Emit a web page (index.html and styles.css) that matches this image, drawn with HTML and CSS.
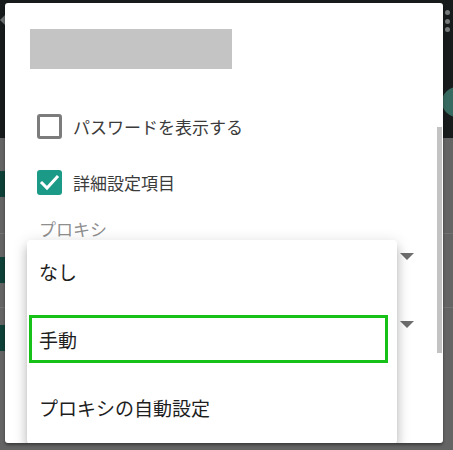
FILE: index.html
```html
<!DOCTYPE html>
<html lang="ja">
<head>
<meta charset="utf-8">
<title>プロキシ設定</title>
<link rel="stylesheet" href="styles.css">
</head>
<body>
<div class="backdrop">
  <div class="bg-back"></div>
  <div class="bg-dots"><span></span><span></span><span></span></div>
  <div class="bg-fab"></div>
  <div class="bg-marks"><span></span><span></span><span></span></div>
  <div class="bg-lines"><span></span><span></span></div>

  <div class="dialog">
    <div class="title-placeholder"></div>

    <label class="check-row">
      <span class="box"></span>
      <span class="check-label">パスワードを表示する</span>
    </label>
    <label class="check-row second">
      <span class="box checked">
        <svg viewBox="0 0 25 25" width="25" height="25"><polyline points="5,13 10,18 20,7" fill="none" stroke="#fff" stroke-width="3" stroke-linecap="square" stroke-linejoin="miter"/></svg>
      </span>
      <span class="check-label">詳細設定項目</span>
    </label>

    <div class="field-label">プロキシ</div>
    <div class="select-row"><span class="arrow"></span></div>
    <div class="select-row second"><span class="arrow"></span></div>

    <div class="scrollbar"></div>

    <ul class="menu">
      <li class="menu-item">なし</li>
      <li class="menu-item focused">手動</li>
      <li class="menu-item">プロキシの自動設定</li>
    </ul>
  </div>
</div>
</body>
</html>
```

FILE: styles.css
```css
html, body {
  margin: 0;
  padding: 0;
}

body {
  width: 453px;
  height: 450px;
  overflow: hidden;
  background: linear-gradient(to bottom, #171b1c 0, #171b1c 138px, #646464 138px, #646464 100%);
  font-family: "Noto Sans CJK JP", "Noto Sans", sans-serif;
}

.backdrop {
  position: relative;
  width: 453px;
  height: 450px;
  padding-top: 3px;
  box-sizing: border-box;
}

.bg-back {
  position: absolute;
  left: 0;
  top: 15px;
  width: 0;
  height: 0;
  border-top: 5px solid transparent;
  border-bottom: 5px solid transparent;
  border-right: 5px solid #6d7172;
}

.bg-dots {
  position: absolute;
  left: 445px;
  top: 10px;
  display: flex;
  flex-direction: column;
  gap: 3.5px;
}

.bg-dots span {
  width: 5px;
  height: 5px;
  border-radius: 50%;
  background: #75797a;
}

.bg-fab {
  position: absolute;
  left: 442px;
  top: 87px;
  width: 30px;
  height: 30px;
  border-radius: 50%;
  background: #36695f;
}

.bg-marks span {
  position: absolute;
  left: 0;
  width: 6px;
  height: 26px;
  background: #0f4037;
}

.bg-marks span:nth-child(1) { top: 171px; }
.bg-marks span:nth-child(2) { top: 257px; }
.bg-marks span:nth-child(3) { top: 325px; }

.bg-lines span {
  position: absolute;
  left: 0;
  width: 453px;
  height: 1px;
  background: #727272;
}

.bg-lines span:nth-child(1) { top: 233px; }
.bg-lines span:nth-child(2) { top: 307px; }

.dialog {
  position: relative;
  margin-left: 5px;
  width: 438px;
  height: 440px;
  box-sizing: border-box;
  padding-top: 26px;
  background: #ffffff;
  border-radius: 3px;
  overflow: hidden;
  box-shadow: 0 2px 3px rgba(0, 0, 0, 0.4);
  display: flex;
  flex-direction: column;
}

.title-placeholder {
  margin-left: 25px;
  width: 202px;
  height: 40px;
  background: #c4c4c4;
  flex: none;
}

.check-row {
  display: flex;
  align-items: center;
  gap: 11px;
  height: 25px;
  margin: 45px 0 0 32px;
  flex: none;
}

.check-row.second {
  margin-top: 31px;
}

.box {
  width: 25px;
  height: 25px;
  box-sizing: border-box;
  border: 3px solid #7c7c7c;
  border-radius: 3px;
  flex: none;
  display: block;
}

.box.checked {
  border: 0;
  background: #1a9a87;
}

.box svg {
  display: block;
}

.check-label {
  font-size: 17px;
  line-height: 25px;
  color: #3b3b3b;
}

.field-label {
  margin: 24px 0 0 34px;
  font-size: 17px;
  line-height: 20px;
  color: #8e8e8e;
  flex: none;
}

.select-row {
  height: 32px;
  margin: 1px 29px 0 34px;
  display: flex;
  align-items: center;
  justify-content: flex-end;
  flex: none;
}

.select-row.second {
  margin-top: 36px;
}

.arrow {
  width: 0;
  height: 0;
  border-left: 7px solid transparent;
  border-right: 7px solid transparent;
  border-top: 7px solid #6e6e6e;
}

.scrollbar {
  position: absolute;
  right: 1px;
  top: 124px;
  width: 5px;
  height: 226px;
  background: #c3c3c3;
}

.menu {
  position: absolute;
  left: 22px;
  top: 237px;
  width: 370px;
  margin: 0;
  padding: 0;
  list-style: none;
  background: #ffffff;
  border-radius: 4px;
  box-shadow: 0 5px 5px -3px rgba(0, 0, 0, 0.2), 0 8px 10px 1px rgba(0, 0, 0, 0.14), 0 3px 14px 2px rgba(0, 0, 0, 0.12);
}

.menu-item {
  position: relative;
  height: 68px;
  box-sizing: border-box;
  padding: 0 0 5px 12px;
  display: flex;
  align-items: center;
  font-size: 19px;
  color: #1e1e1e;
}

.menu-item.focused::after {
  content: "";
  position: absolute;
  left: 2px;
  right: 9px;
  top: 7px;
  bottom: 13px;
  border: 3px solid #17c117;
}
```
